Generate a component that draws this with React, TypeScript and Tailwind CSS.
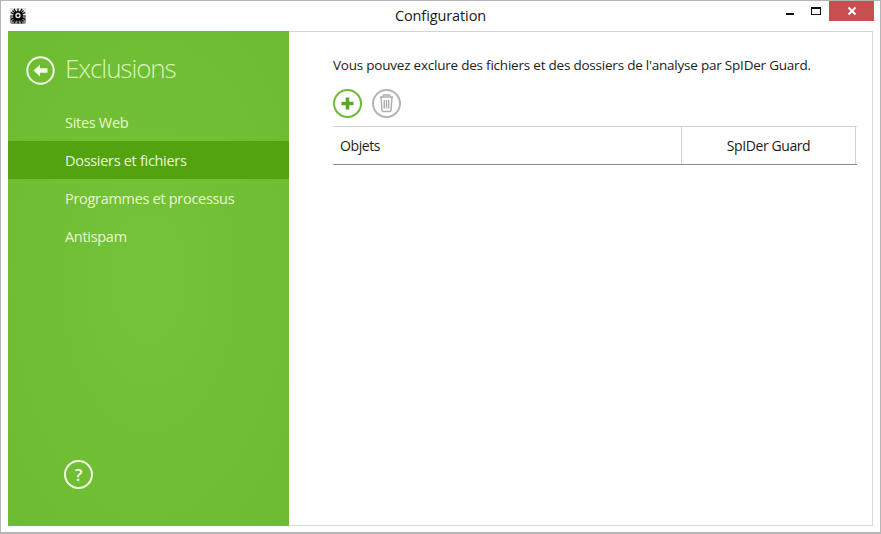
import React from "react";

const menuItems = ["Sites Web", "Dossiers et fichiers", "Programmes et processus", "Antispam"];

const SpiderLogo = () => (
  <svg width="16" height="16" viewBox="0 0 16 16">
    <rect x="0" y="0" width="16" height="16" rx="2" fill="#8b8d90" />
    <rect x="0" y="0" width="16" height="9" rx="2" fill="#e4e4e4" />
    <g stroke="#000" strokeWidth="1.2" fill="none">
      <path d="M8 0.5v15M0.5 8h15M2.5 2.5l11 11M13.5 2.5l-11 11M4 0.8l8 14.4M12 0.8L4 15.2M0.8 4.5l14.4 7M15.2 4.5l-14.4 7" />
      <circle cx="8" cy="8" r="4.2" fill="#111" />
    </g>
    <circle cx="8" cy="7.4" r="2.6" fill="#e8e8e8" />
    <circle cx="8" cy="7.6" r="1.3" fill="#111" />
  </svg>
);

const App: React.FC = () => {
  return (
    <div className="w-[881px] h-[534px] bg-white flex flex-col border border-[#b5b5b5] border-b-[2px] overflow-hidden font-['Open_Sans','Noto_Sans',sans-serif]">
      <div className="h-[30px] shrink-0 flex items-center relative bg-[#fefefe]">
        <div className="ml-[9px] -mt-[1px]">
          <SpiderLogo />
        </div>
        <div className="absolute left-0 right-0 top-[5px] text-center text-[14.5px] leading-[19px] text-[#1b1b1b] tracking-[-0.1px]">
          Configuration
        </div>
        <div className="ml-auto flex items-start self-start h-full">
          <svg width="10" height="10" viewBox="0 0 10 10" className="mt-[6px]">
            <rect x="1" y="6" width="8" height="2" fill="#111" />
          </svg>
          <svg width="11" height="9" viewBox="0 0 11 9" className="mt-[6px] ml-[16px]">
            <rect x="0.5" y="0.5" width="9" height="7" fill="none" stroke="#111" strokeWidth="1" />
            <rect x="0" y="0" width="10" height="2" fill="#111" />
          </svg>
          <div className="ml-[7px] mr-[6px] w-[45px] h-[20px] bg-[#c74f50] flex items-center justify-center">
            <svg width="10" height="10" viewBox="0 0 10 10">
              <path d="M1.5 1.5l7 7M8.5 1.5l-7 7" stroke="#fff" strokeWidth="2" />
            </svg>
          </div>
        </div>
      </div>

      <div className="flex-1 flex mx-[7px] mb-[6px] border border-l-0 border-[#d9d9d9] border-t-[#d4d4d4] min-h-0">
        <div className="w-[281px] shrink-0 flex flex-col bg-[radial-gradient(ellipse_at_center,#74c339_0%,#6cbb30_100%)] -mt-[1px] -mb-[1px]">
          <div className="flex items-center pl-[18px] h-[78px]">
            <svg width="29" height="29" viewBox="0 0 29 29" className="shrink-0">
              <circle cx="14.5" cy="14.5" r="13.2" fill="none" stroke="#f2fbe6" strokeWidth="2" />
              <path d="M7.5 14.5l6.5-6v3.8h7.5v4.4H14v3.8z" fill="#f2fbe6" />
            </svg>
            <span className="ml-[10px] text-[26px] leading-[34px] font-light text-[#dcf5b8] tracking-[-1.1px] -mt-[5px]">
              Exclusions
            </span>
          </div>
          <div className="-mt-[6px] flex flex-col">
            {menuItems.map((item, index) => (
              <div
                key={index}
                className={`h-[38px] flex items-center pl-[57px] pt-[1px] text-[14.5px] tracking-[-0.3px] ${
                  index === 1 ? "bg-[#52a30f] text-[#eaf8d8]" : "text-[#e8f8d2]"
                }`}
              >
                {item}
              </div>
            ))}
          </div>
          <div className="mt-auto pl-[56px] pb-[37px]">
            <div className="w-[29px] h-[29px] rounded-full border-2 border-[#f2fbe6] flex items-center justify-center text-[17px] font-semibold text-[#f2fbe6]">
              ?
            </div>
          </div>
        </div>

        <div className="flex-1 pl-[44px] pr-[17px] pt-[23px] flex flex-col">
          <p className="text-[13.5px] leading-[20px] text-[#1c1c1c] tracking-[-0.22px] whitespace-nowrap">
            Vous pouvez exclure des fichiers et des dossiers de l'analyse par SpIDer Guard.
          </p>
          <div className="flex gap-[10px] mt-[14px]">
            <svg width="29" height="29" viewBox="0 0 29 29">
              <circle cx="14.5" cy="14.5" r="13.5" fill="#fff" stroke="#6dbb34" strokeWidth="2" />
              <path d="M14.5 8.5v12M8.5 14.5h12" stroke="#5aa828" strokeWidth="3.6" />
            </svg>
            <svg width="29" height="29" viewBox="0 0 29 29">
              <circle cx="14.5" cy="14.5" r="13.5" fill="#fff" stroke="#b5b5b5" strokeWidth="2" />
              <path
                d="M8 8h13M11.5 8V6h6v2M9 8l1 13.5q.1 1 1 1h7q.9 0 1-1L20 8M12.3 11v8.5M14.5 11v8.5M16.7 11v8.5"
                fill="none"
                stroke="#b0b0b0"
                strokeWidth="1.5"
              />
            </svg>
          </div>
          <div className="mt-[8px] h-[39px] flex w-[524px] border-t border-[#d2d2d2] border-b border-b-[#8a8a8a] text-[14px] text-[#1c1c1c] tracking-[-0.4px]">
            <div className="flex-1 flex items-center pl-[7px] border-r border-[#d2d2d2]">Objets</div>
            <div className="w-[174px] flex items-center justify-center border-r border-[#d2d2d2] mr-[1px]">SpIDer Guard</div>
          </div>
        </div>
      </div>
    </div>
  );
};

export default App;
